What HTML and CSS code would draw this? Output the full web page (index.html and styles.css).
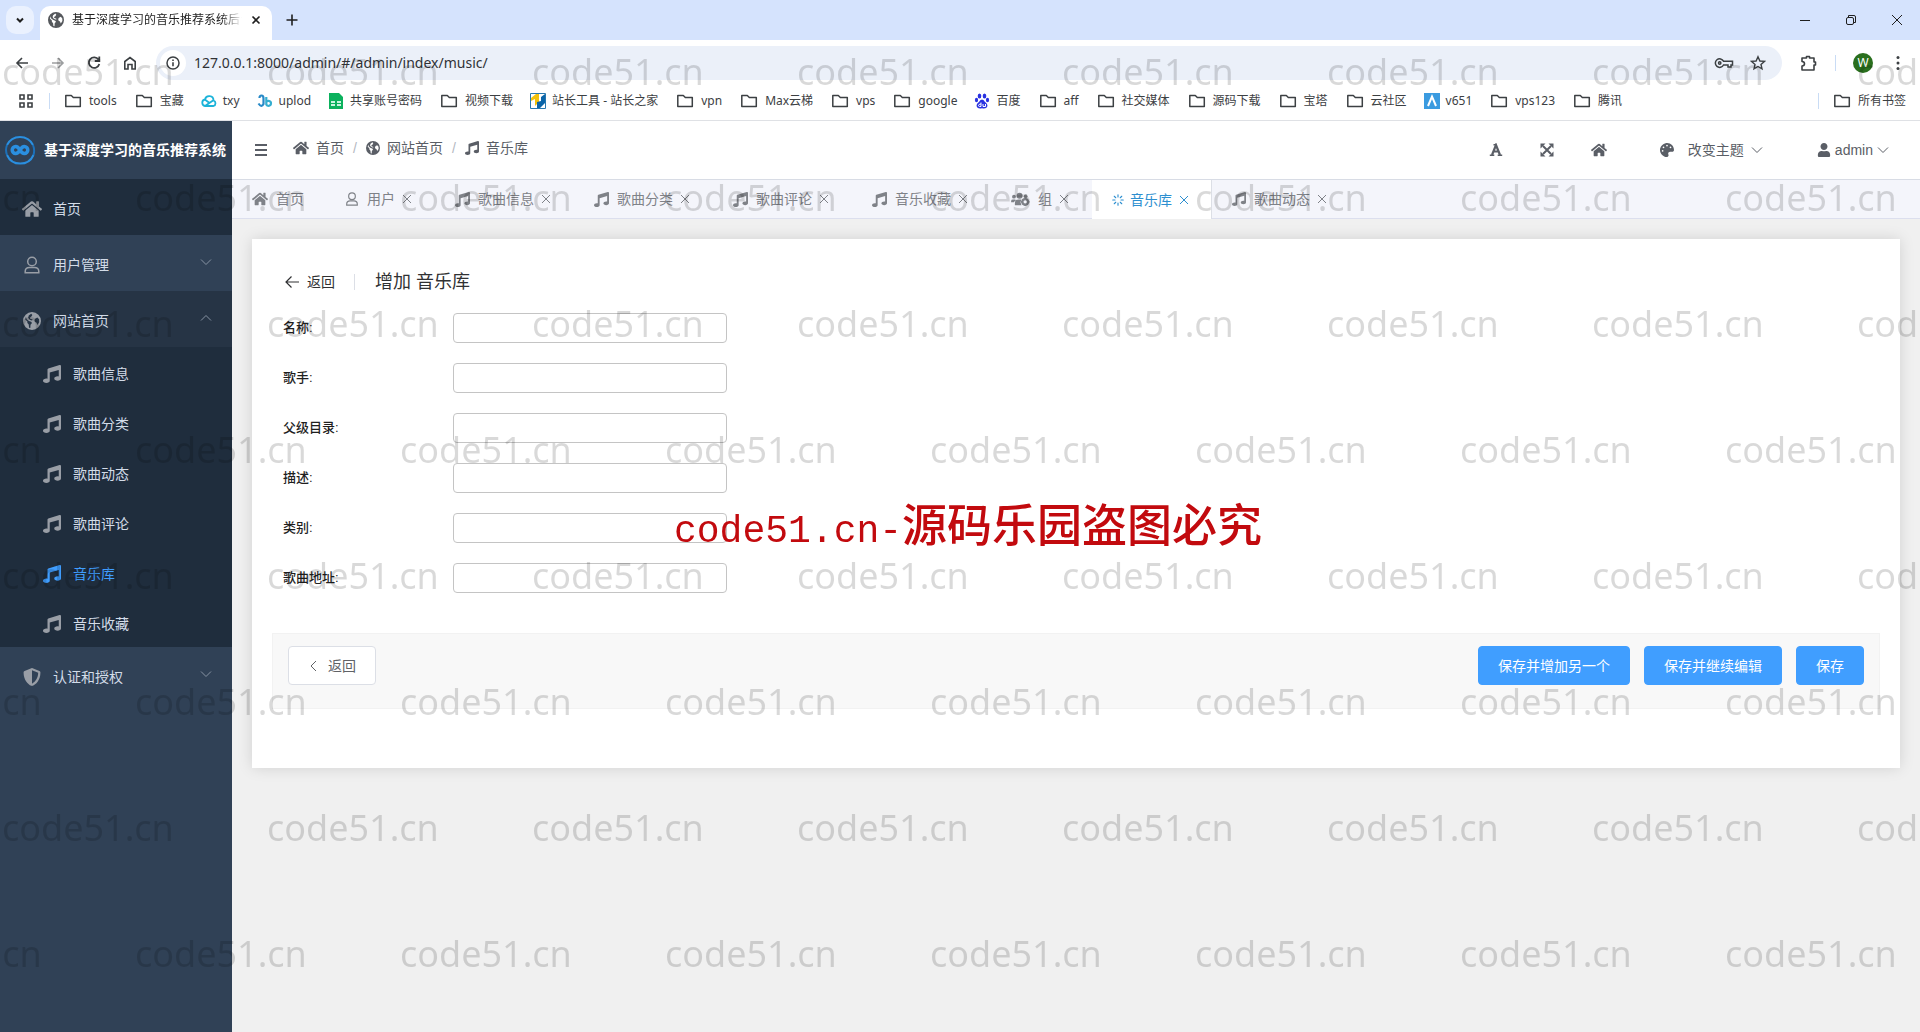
FILE: index.html
```html
<!DOCTYPE html>
<html lang="zh-CN">
<head>
<meta charset="utf-8">
<title>基于深度学习的音乐推荐系统后台</title>
<link rel="stylesheet" href="styles.css">
</head>
<body>
<svg class="sprite" aria-hidden="true">
  <symbol id="music" viewBox="0 0 512 512"><path fill="currentColor" d="M511.99 32.01c0-21.71-21.1-37.01-41.6-30.51L150.4 96c-13.3 4.2-22.4 16.5-22.4 30.5v261.42c-10.05-2.38-20.72-3.92-32-3.92-53.02 0-96 28.65-96 64s42.98 64 96 64 96-28.65 96-64V214.31l256-75.02v184.63c-10.05-2.38-20.72-3.92-32-3.92-53.02 0-96 28.65-96 64s42.98 64 96 64 96-28.65 96-64l-.01-351.99z"/></symbol>
  <symbol id="home" viewBox="0 0 576 512"><path fill="currentColor" d="M280.37 148.26L96 300.11V464a16 16 0 0 0 16 16l112.06-.29a16 16 0 0 0 15.92-16V368a16 16 0 0 1 16-16h64a16 16 0 0 1 16 16v95.64a16 16 0 0 0 16 16.05L464 480a16 16 0 0 0 16-16V300L295.67 148.26a12.19 12.19 0 0 0-15.3 0zM571.6 251.47L488 182.56V44.05a12 12 0 0 0-12-12h-56a12 12 0 0 0-12 12v72.61L318.47 43a48 48 0 0 0-61 0L4.34 251.47a12 12 0 0 0-1.6 16.9l25.5 31A12 12 0 0 0 45.15 301l235.22-193.74a12.19 12.19 0 0 1 15.3 0L530.9 301a12 12 0 0 0 16.9-1.6l25.5-31a12 12 0 0 0-1.7-16.93z"/></symbol>
  <symbol id="palette" viewBox="0 0 512 512"><path fill="currentColor" d="M204.3 5C104.9 24.4 24.8 104.3 5.2 203.4c-37 187 131.7 326.4 258.8 306.7 41.2-6.4 61.4-54.6 42.5-91.7-23.1-45.4 9.9-98.4 60.9-98.4h79.7c35.8 0 64.8-29.6 64.9-65.3C511.5 97.1 368.1-26.9 204.3 5zM96 320c-17.7 0-32-14.3-32-32s14.3-32 32-32 32 14.3 32 32-14.3 32-32 32zm32-128c-17.7 0-32-14.3-32-32s14.3-32 32-32 32 14.3 32 32-14.3 32-32 32zm128-64c-17.7 0-32-14.3-32-32s14.3-32 32-32 32 14.3 32 32-14.3 32-32 32zm128 64c-17.7 0-32-14.3-32-32s14.3-32 32-32 32 14.3 32 32-14.3 32-32 32z"/></symbol>
  <symbol id="person" viewBox="0 0 448 512"><path fill="currentColor" d="M224 256c70.7 0 128-57.3 128-128S294.7 0 224 0 96 57.3 96 128s57.3 128 128 128zm89.6 32h-16.7c-22.2 10.2-46.9 16-72.9 16s-50.6-5.8-72.9-16h-16.7C60.2 288 0 348.2 0 422.4V464c0 26.5 21.5 48 48 48h352c26.5 0 48-21.5 48-48v-41.6c0-74.2-60.2-134.4-134.4-134.4z"/></symbol>
  <symbol id="shield" viewBox="0 0 512 512"><path fill="currentColor" d="M466.5 83.7l-192-80a48.15 48.15 0 0 0-36.9 0l-192 80C27.7 91.1 16 108.6 16 128c0 198.5 114.5 335.7 221.5 380.3 11.8 4.9 25.1 4.9 36.9 0C360.1 472.6 496 349.3 496 128c0-19.4-11.7-36.9-29.5-44.3zM256.1 446.3l-.1-381 175.9 73.3c-3.3 151.4-82.1 261.1-175.8 307.7z"/></symbol>
  <symbol id="globe" viewBox="0 0 16 16"><path fill="currentColor" fill-rule="evenodd" d="M8 0a8 8 0 1 0 0 16A8 8 0 0 0 8 0zM2.600 4.300 3.200 6.400 5.300 8.100 7.200 8.700 8 9.800 6.700 11.300 6.500 14.200 5.400 13.900 5.100 11.200 3.900 9.700 3.800 8.300 2 6.700zM7.300 1.500 8.300 2.700 7.300 4.200 6 5 6.400 6 8 6.500 8.700 7.200 7.300 7.500 5.500 6.400 4.600 5 5.100 3.200zM11 5.800 12.800 4.800 14.300 6.500 14.400 9 12.800 11.500 12 9.500 10.600 8.700 10.200 7z"/></symbol>
  <symbol id="user-line" viewBox="0 0 16 18"><g fill="none" stroke="currentColor" stroke-width="1.500"><circle cx="8" cy="5.500" r="4.300"/><path d="M5.500 11.500h5q4.300 0 4.300 4v1.300H1.200v-1.300q0-4 4.300-4z"/></g></symbol>
  <symbol id="team" viewBox="0 0 20 16"><g fill="currentColor"><circle cx="3" cy="5" r="2"/><circle cx="9" cy="4" r="3.200"/><circle cx="15.500" cy="4.500" r="2"/><path d="M0 11V9.500Q0 8 2 8h2q1 0 1 .7Q3 10 3 11zM4 14v-2q0-4 4-4h3l-1 3 1 3z"/></g><circle cx="15" cy="10.500" r="3" fill="none" stroke="currentColor" stroke-width="2.400"/><path d="M15 6v2M15 13v2M10.500 10.500h2M17.500 10.500h2" stroke="currentColor" stroke-width="2"/></symbol>
  <symbol id="spinner" viewBox="0 0 16 16"><path stroke="currentColor" stroke-width="1.500" stroke-linecap="round" d="M8 1v3M8 12v3M1 8h3M12 8h3M3 3l2 2M11 11l2 2M13 3l-2 2M5 11l-2 2"/></symbol>
  <symbol id="down" viewBox="0 0 12 12"><path fill="none" stroke="currentColor" d="M1 3.500l5 5 5-5"/></symbol>
  <symbol id="up" viewBox="0 0 12 12"><path fill="none" stroke="currentColor" d="M1 8.500l5-5 5 5"/></symbol>
  <symbol id="close" viewBox="0 0 14 14"><path fill="none" stroke="currentColor" d="M3 3l8 8M11 3l-8 8"/></symbol>
  <symbol id="folder" viewBox="0 0 20 16"><path fill="none" stroke="currentColor" stroke-width="1.500" stroke-linejoin="round" d="M2.800 13.500v-11h5.500l2 2h7v9z"/></symbol>
</svg>

<header class="browser">
  <div class="strip">
    <button class="tab-search" aria-label="搜索标签页"><svg width="10" height="10" viewBox="0 0 10 10"><path fill="none" stroke="currentColor" stroke-width="2" d="M2 3.500l3 3 3-3"/></svg></button>
    <div class="browser-tab">
      <svg class="i16"><use href="#globe"/></svg>
      <span class="tab-title">基于深度学习的音乐推荐系统后台</span>
      <button class="plain" aria-label="关闭标签页"><svg width="12" height="12" viewBox="0 0 12 12"><path stroke="currentColor" stroke-width="1.600" d="M2.500 2.500l7 7M9.500 2.500l-7 7"/></svg></button>
    </div>
    <button class="plain new-tab" aria-label="新标签页"><svg width="14" height="14" viewBox="0 0 14 14"><path stroke="currentColor" stroke-width="1.600" d="M7 1.500v11M1.500 7h11"/></svg></button>
    <div class="window-buttons">
      <button class="plain" aria-label="最小化"><svg width="14" height="14" viewBox="0 0 14 14"><path stroke="currentColor" d="M2 7.500h10"/></svg></button>
      <button class="plain" aria-label="还原"><svg width="14" height="14" viewBox="0 0 14 14"><g fill="none" stroke="currentColor"><rect x="2.500" y="4.500" width="7" height="7" rx="1.500"/><path d="M4.500 4V2.500H10q1.500 0 1.500 1.500v5.500H10"/></g></svg></button>
      <button class="plain" aria-label="关闭"><svg width="14" height="14" viewBox="0 0 14 14"><path stroke="currentColor" d="M2 2l10 10M12 2L2 12"/></svg></button>
    </div>
  </div>
  <div class="toolbar">
    <nav class="nav-buttons">
      <button class="plain" aria-label="后退"><svg class="i16" viewBox="0 0 16 16"><path fill="none" stroke="currentColor" stroke-width="1.600" d="M14 8H3M8 3L3 8l5 5"/></svg></button>
      <button class="plain faded" aria-label="前进"><svg class="i16" viewBox="0 0 16 16"><path fill="none" stroke="currentColor" stroke-width="1.600" d="M2 8h11M8 3l5 5-5 5"/></svg></button>
      <button class="plain" aria-label="重新加载"><svg class="i16" viewBox="0 0 16 16"><path fill="none" stroke="currentColor" stroke-width="1.800" d="M12.500 4.500A5.300 5.300 0 1 0 13.300 9M13.300 1.500v4.500H8.800"/></svg></button>
      <button class="plain" aria-label="主页"><svg class="i16" viewBox="0 0 16 16"><path fill="none" stroke="currentColor" stroke-width="1.600" d="M2.800 14V6.500L8 2.500l5.200 4V14H10V9.500H6V14z"/></svg></button>
    </nav>
    <div class="address">
      <span class="info"><svg class="i16" viewBox="0 0 16 16"><circle cx="8" cy="8" r="6" fill="none" stroke="currentColor" stroke-width="1.500"/><path stroke="currentColor" stroke-width="1.600" d="M8 7.200v4M8 4.500v1.500"/></svg></span>
      <input class="url" aria-label="地址" value="127.0.0.1:8000/admin/#/admin/index/music/">
      <button class="plain" aria-label="密码"><svg width="20" height="16" viewBox="0 0 20 16"><g fill="none" stroke="currentColor" stroke-width="1.500"><path d="M9.500 6.200h9V10h-1.500v2h-3v-2H9.500a4.300 4.300 0 1 1 0-3.800z"/><circle cx="5.700" cy="8" r="1.200"/></g></svg></button>
      <button class="plain" aria-label="收藏"><svg class="i16" viewBox="0 0 16 16"><path fill="none" stroke="currentColor" stroke-width="1.400" d="M8 1.800l1.900 4.200 4.500.4-3.400 3 1 4.400L8 11.500l-4 2.300 1-4.400-3.400-3 4.500-.4z"/></svg></button>
    </div>
    <div class="tools">
      <button class="plain" aria-label="扩展程序"><svg width="18" height="18" viewBox="0 0 18 18"><path fill="none" stroke="currentColor" stroke-width="1.600" stroke-linejoin="round" d="M2 4h4.500V2.500h3V4H14v4h1.500v3H14v5H2v-4q2.500 0 2.500-2.200T2 7.500z"/></svg></button>
      <span class="rule"></span>
      <button class="avatar" aria-label="个人资料">W</button>
      <button class="plain" aria-label="菜单"><svg class="i16" viewBox="0 0 16 16"><g fill="currentColor"><circle cx="8" cy="2.500" r="1.500"/><circle cx="8" cy="8" r="1.500"/><circle cx="8" cy="13.500" r="1.500"/></g></svg></button>
    </div>
  </div>
  <nav class="bookmarks">
    <button class="plain" aria-label="应用"><svg class="i16" viewBox="0 0 16 16"><path fill="none" stroke="currentColor" stroke-width="1.600" d="M2 2h4v4H2zM10 2h4v4h-4zM2 10h4v4H2zM10 10h4v4h-4z"/></svg></button>
    <span class="rule"></span>
    <a href="#"><svg class="folder"><use href="#folder"/></svg>tools</a>
    <a href="#"><svg class="folder"><use href="#folder"/></svg>宝藏</a>
    <a href="#"><svg class="i16" viewBox="0 0 16 16"><path fill="none" stroke="#1cb3d9" stroke-width="1.800" d="M4 13a3.300 3.300 0 0 1 0-6.500 4.300 4.300 0 0 1 8.500 1A2.900 2.900 0 0 1 12.500 13zL12 7.500M4.500 7l4 3"/></svg>txy</a>
    <a href="#"><svg class="i16" viewBox="0 0 16 16"><path fill="none" stroke="#2789c7" stroke-width="2.200" d="M1.500 10.500q3 4.500 5 .5V5.500q0-3-2-3t-2 2.500"/><path fill="none" stroke="#35aed0" stroke-width="2.200" d="M9.300 4v7.500a2.500 2.500 0 1 0 .5-3"/></svg>uplod</a>
    <a href="#"><svg class="i16" viewBox="0 0 16 16"><path fill="#0bb15d" d="M1 0h10l4 4v12H1z"/><path fill="#c9f5df" d="M3 8h4v2H3zM9 8h4v2H9zM3 11h4v2H3zM9 11h4v2H9z"/></svg>共享账号密码</a>
    <a href="#"><svg class="folder"><use href="#folder"/></svg>视频下载</a>
    <a href="#"><svg class="i16" viewBox="0 0 16 16"><path fill="#fff" stroke="#2778af" d="M.5.500h15v15H.5z"/><path fill="#f3c20c" d="M1 5l5-4h3v8l-4 4V6L1 8z"/><path fill="#0b65a9" d="M7 9l4-1V4l4-3v9l-5 5H7z"/></svg>站长工具 - 站长之家</a>
    <a href="#"><svg class="folder"><use href="#folder"/></svg>vpn</a>
    <a href="#"><svg class="folder"><use href="#folder"/></svg>Max云梯</a>
    <a href="#"><svg class="folder"><use href="#folder"/></svg>vps</a>
    <a href="#"><svg class="folder"><use href="#folder"/></svg>google</a>
    <a href="#"><svg class="i16" viewBox="0 0 16 16"><g fill="#2932e1"><ellipse cx="5.500" cy="3" rx="1.800" ry="2.500"/><ellipse cx="10.500" cy="3" rx="1.800" ry="2.500"/><ellipse cx="2.500" cy="7" rx="1.600" ry="2.200"/><ellipse cx="13.500" cy="7" rx="1.600" ry="2.200"/><path d="M8 6.500q2 0 3 2.500 3 2 2.300 4.500-.8 2.500-5.300 1.700-4.500.8-5.300-1.700Q2 11 5 9q1-2.500 3-2.500z"/></g><path fill="none" stroke="#fff" d="M7 9.500v4H5.500q-1 0-1-1.200T7 11M9 11v2.500h2.500V11"/></svg>百度</a>
    <a href="#"><svg class="folder"><use href="#folder"/></svg>aff</a>
    <a href="#"><svg class="folder"><use href="#folder"/></svg>社交媒体</a>
    <a href="#"><svg class="folder"><use href="#folder"/></svg>源码下载</a>
    <a href="#"><svg class="folder"><use href="#folder"/></svg>宝塔</a>
    <a href="#"><svg class="folder"><use href="#folder"/></svg>云社区</a>
    <a href="#"><svg class="i16" viewBox="0 0 16 16"><path fill="#3a9be0" d="M0 0h16v16H0z"/><path fill="none" stroke="#fff" stroke-width="2" d="M4 13L8 3.500 12 13"/></svg>v651</a>
    <a href="#"><svg class="folder"><use href="#folder"/></svg>vps123</a>
    <a href="#"><svg class="folder"><use href="#folder"/></svg>腾讯</a>
    <span class="rule push"></span>
    <a href="#"><svg class="folder"><use href="#folder"/></svg>所有书签</a>
  </nav>
</header>

<div class="app">
  <aside class="sidebar">
    <div class="brand">
      <svg width="32" height="32" viewBox="0 0 32 32"><g fill="none" stroke="#2a8fe0" stroke-width="2"><path d="M3 11A14.500 14.500 0 0 1 29 11M29.500 21A14.500 14.500 0 0 1 3 21"/><path stroke="#1d70b8" d="M3 11a14 14 0 0 0 0 10M29 11q2 5 0.500 10"/><path stroke-width="3.500" d="M16 16c-1.500-2.500-2.800-3.500-4.300-3.500a3.500 3.500 0 0 0 0 7c1.500 0 2.800-1 4.300-3.500s2.800-3.500 4.300-3.500a3.500 3.500 0 0 1 0 7c-1.500 0-2.800-1-4.300-3.500z"/></g></svg>
      <strong>基于深度学习的音乐推荐系统</strong>
    </div>
    <nav class="menu">
      <a class="item dark" href="#"><svg class="i20"><use href="#home"/></svg>首页</a>
      <a class="item" href="#"><svg class="i20"><use href="#user-line"/></svg>用户管理<svg class="arrow"><use href="#down"/></svg></a>
      <a class="item open" href="#"><svg class="i20"><use href="#globe"/></svg>网站首页<svg class="arrow"><use href="#up"/></svg></a>
      <div class="submenu">
        <a href="#"><svg class="i20"><use href="#music"/></svg>歌曲信息</a>
        <a href="#"><svg class="i20"><use href="#music"/></svg>歌曲分类</a>
        <a href="#"><svg class="i20"><use href="#music"/></svg>歌曲动态</a>
        <a href="#"><svg class="i20"><use href="#music"/></svg>歌曲评论</a>
        <a class="current" href="#"><svg class="i20"><use href="#music"/></svg>音乐库</a>
        <a href="#"><svg class="i20"><use href="#music"/></svg>音乐收藏</a>
      </div>
      <a class="item" href="#"><svg class="i20"><use href="#shield"/></svg>认证和授权<svg class="arrow"><use href="#down"/></svg></a>
    </nav>
  </aside>

  <div class="content">
    <header class="topbar">
      <button class="plain" aria-label="折叠菜单"><svg width="14" height="14" viewBox="0 0 14 14"><path stroke="currentColor" stroke-width="2" d="M1 2h12M1 7h12M1 12h12"/></svg></button>
      <nav class="crumbs">
        <a href="#"><svg class="i16"><use href="#home"/></svg>首页</a><span class="slash">/</span>
        <a href="#"><svg class="i14"><use href="#globe"/></svg>网站首页</a><span class="slash">/</span>
        <a href="#"><svg class="i14"><use href="#music"/></svg>音乐库</a>
      </nav>
      <div class="actions">
        <button class="plain" aria-label="字体"><svg class="i14" viewBox="0 0 14 14"><path fill="none" stroke="currentColor" stroke-width="2.200" d="M3 12L7 2l4 10M4.500 8.500h5"/><path stroke="currentColor" stroke-width="1.600" d="M.8 12.200h4.500M8.700 12.200h4.500M4.500 1.800H7"/></svg></button>
        <button class="plain" aria-label="全屏"><svg class="i14" viewBox="0 0 14 14"><path stroke="currentColor" stroke-width="2" d="M3 3l8 8M11 3l-8 8"/><path fill="currentColor" d="M.5.500h5l-5 5zM13.500.500v5l-5-5zM.5 13.500v-5l5 5zM13.500 13.500h-5l5-5z"/></svg></button>
        <button class="plain" aria-label="主页"><svg class="i16"><use href="#home"/></svg></button>
      </div>
      <button class="plain theme"><svg class="i14"><use href="#palette"/></svg>改变主题<svg class="i12"><use href="#down"/></svg></button>
      <button class="plain account"><svg class="i14"><use href="#person"/></svg>admin<svg class="i12"><use href="#down"/></svg></button>
    </header>

    <nav class="tabs">
      <div class="tab"><a href="#"><svg class="i16"><use href="#home"/></svg>首页</a></div>
      <div class="tab"><a href="#"><svg class="i14"><use href="#user-line"/></svg>用户</a><button class="plain" aria-label="关闭"><svg class="i14"><use href="#close"/></svg></button></div>
      <div class="tab"><a href="#"><svg class="i15"><use href="#music"/></svg>歌曲信息</a><button class="plain" aria-label="关闭"><svg class="i14"><use href="#close"/></svg></button></div>
      <div class="tab"><a href="#"><svg class="i15"><use href="#music"/></svg>歌曲分类</a><button class="plain" aria-label="关闭"><svg class="i14"><use href="#close"/></svg></button></div>
      <div class="tab"><a href="#"><svg class="i15"><use href="#music"/></svg>歌曲评论</a><button class="plain" aria-label="关闭"><svg class="i14"><use href="#close"/></svg></button></div>
      <div class="tab"><a href="#"><svg class="i15"><use href="#music"/></svg>音乐收藏</a><button class="plain" aria-label="关闭"><svg class="i14"><use href="#close"/></svg></button></div>
      <div class="tab"><a href="#"><svg class="team"><use href="#team"/></svg>组</a><button class="plain" aria-label="关闭"><svg class="i14"><use href="#close"/></svg></button></div>
      <div class="tab active"><a href="#"><svg class="i12"><use href="#spinner"/></svg>音乐库</a><button class="plain" aria-label="关闭"><svg class="i14"><use href="#close"/></svg></button></div>
      <div class="tab"><a href="#"><svg class="i14"><use href="#music"/></svg>歌曲动态</a><button class="plain" aria-label="关闭"><svg class="i14"><use href="#close"/></svg></button></div>
    </nav>

    <main class="card">
      <div class="page-head">
        <a class="back" href="#"><svg class="i16" viewBox="0 0 16 16"><path fill="none" stroke="currentColor" stroke-width="1.200" d="M15 8H2M7.500 2.500L2 8l5.500 5.500"/></svg>返回</a>
        <h1>增加 音乐库</h1>
      </div>
      <form>
        <div class="field"><label for="f1">名称:</label><input id="f1" type="text"></div>
        <div class="field"><label for="f2">歌手:</label><input id="f2" type="text"></div>
        <div class="field"><label for="f3">父级目录:</label><input id="f3" type="text"></div>
        <div class="field"><label for="f4">描述:</label><input id="f4" type="text"></div>
        <div class="field"><label for="f5">类别:</label><input id="f5" type="text"></div>
        <div class="field"><label for="f6">歌曲地址:</label><input id="f6" type="text"></div>
        <div class="submit-row">
          <button class="btn" type="button"><svg class="i12" viewBox="0 0 12 12"><path fill="none" stroke="currentColor" d="M8 1L3 6l5 5"/></svg>返回</button>
          <button class="btn primary first" type="submit">保存并增加另一个</button>
          <button class="btn primary" type="submit">保存并继续编辑</button>
          <button class="btn primary" type="submit">保存</button>
        </div>
      </form>
    </main>
  </div>
</div>

<div class="watermarks" aria-hidden="true">
  <div class="wm"><span>code51.cn</span><span>code51.cn</span><span>code51.cn</span><span>code51.cn</span><span>code51.cn</span><span>code51.cn</span><span>code51.cn</span><span>code51.cn</span></div>
  <div class="wm odd"><span>code51.cn</span><span>code51.cn</span><span>code51.cn</span><span>code51.cn</span><span>code51.cn</span><span>code51.cn</span><span>code51.cn</span><span>code51.cn</span></div>
  <div class="wm"><span>code51.cn</span><span>code51.cn</span><span>code51.cn</span><span>code51.cn</span><span>code51.cn</span><span>code51.cn</span><span>code51.cn</span><span>code51.cn</span></div>
  <div class="wm odd"><span>code51.cn</span><span>code51.cn</span><span>code51.cn</span><span>code51.cn</span><span>code51.cn</span><span>code51.cn</span><span>code51.cn</span><span>code51.cn</span></div>
  <div class="wm"><span>code51.cn</span><span>code51.cn</span><span>code51.cn</span><span>code51.cn</span><span>code51.cn</span><span>code51.cn</span><span>code51.cn</span><span>code51.cn</span></div>
  <div class="wm odd"><span>code51.cn</span><span>code51.cn</span><span>code51.cn</span><span>code51.cn</span><span>code51.cn</span><span>code51.cn</span><span>code51.cn</span><span>code51.cn</span></div>
  <div class="wm"><span>code51.cn</span><span>code51.cn</span><span>code51.cn</span><span>code51.cn</span><span>code51.cn</span><span>code51.cn</span><span>code51.cn</span><span>code51.cn</span></div>
  <div class="wm odd"><span>code51.cn</span><span>code51.cn</span><span>code51.cn</span><span>code51.cn</span><span>code51.cn</span><span>code51.cn</span><span>code51.cn</span><span>code51.cn</span></div>
</div>
<p class="notice"><span class="latin">code51.cn-</span>源码乐园盗图必究</p>
</body>
</html>
```
FILE: styles.css
```css
* { box-sizing: border-box; }

body {
  margin: 0;
  min-height: 100vh;
  display: flex;
  flex-direction: column;
  background: #f0f0f0;
  color: #303133;
  font: 14px/20px "Liberation Sans", "Noto Sans CJK SC", sans-serif;
}

a { color: inherit; text-decoration: none; }
svg { flex: none; display: block; }
button, input { font: inherit; }
.sprite { position: absolute; width: 0; height: 0; }

.plain {
  display: flex;
  align-items: center;
  padding: 0;
  border: 0;
  background: none;
  color: inherit;
}

.i12 { width: 12px; height: 12px; }
.i14 { width: 14px; height: 14px; }
.i15 { width: 15px; height: 15px; }
.i16 { width: 16px; height: 16px; }
.i20 { width: 20px; height: 18px; }
.team { width: 19px; height: 15px; }
.folder { width: 20px; height: 16px; }

/* browser window */
.browser {
  background: #fff;
  border-bottom: 1px solid #dfe1e5;
  color: #3c4043;
  font-family: "Noto Sans", "Noto Sans CJK SC", sans-serif;
}

.strip {
  display: flex;
  height: 40px;
  background: #d5e3fd;
  color: #1f1f1f;
}

.tab-search {
  display: grid;
  place-items: center;
  width: 28px;
  height: 28px;
  margin: 6px;
  padding: 0;
  border: 0;
  border-radius: 10px;
  background: #eaf1fe;
  color: inherit;
}

.browser-tab {
  display: flex;
  align-items: center;
  gap: 8px;
  width: 232px;
  margin-top: 6px;
  padding: 0 10px 6px 8px;
  border-radius: 10px 10px 0 0;
  background: #fff;
  font-size: 12px;
}

.browser-tab > .i16 { color: #55585c; }

.tab-title {
  flex: 1;
  overflow: hidden;
  white-space: nowrap;
  mask-image: linear-gradient(to right, #000 88%, transparent);
}

.new-tab { margin: 0 13px; }
.window-buttons { display: flex; gap: 32px; margin-left: auto; padding-right: 16px; }

.toolbar { display: flex; align-items: center; height: 46px; }
.nav-buttons { display: flex; gap: 20px; padding: 0 18px 0 14px; }
.faded { opacity: .5; }

.address {
  flex: 1;
  display: flex;
  align-items: center;
  gap: 16px;
  height: 34px;
  padding: 0 16px 0 4px;
  border-radius: 17px;
  background: #ebf0f9;
}

.info {
  display: grid;
  place-items: center;
  width: 26px;
  height: 26px;
  margin-right: -8px;
  border-radius: 50%;
  background: #fff;
}

.url {
  flex: 1;
  padding: 0;
  border: 0;
  background: none;
  color: #303236;
}

.tools { display: flex; align-items: center; gap: 17px; padding: 0 14px 0 18px; }
.rule { width: 1px; height: 16px; background: #c9dcf5; }

.avatar {
  width: 20px;
  height: 20px;
  padding: 0;
  border: 0;
  border-radius: 50%;
  background: #2a6f1e;
  color: #fff;
  font-size: 12px;
}

.bookmarks {
  display: flex;
  align-items: center;
  gap: 17px;
  height: 34px;
  padding: 0 14px 4px 18px;
  font-size: 12px;
}

.bookmarks a { display: flex; align-items: center; gap: 6px; white-space: nowrap; }
.bookmarks .rule { margin: 0 -4px 0 -2px; }
.bookmarks .push { margin-left: auto; }

/* admin */
.app { flex: 1; display: flex; }

.sidebar { flex: none; width: 232px; background: #304156; color: #d3dce8; }

.brand {
  display: flex;
  align-items: center;
  gap: 8px;
  height: 58px;
  padding-left: 4px;
  color: #fff;
  white-space: nowrap;
}

.item, .submenu a { display: flex; align-items: center; gap: 11px; }
.item { height: 56px; padding: 4px 20px 0 22px; }
.sidebar .i20 { color: #999ea6; }
.dark { background: #1f2d3d; }
.open { background: #263445; }
.arrow { width: 12px; height: 12px; margin: 0 0 6px auto; color: #8793a3; }
.submenu { background: #1f2d3d; }
.submenu a { height: 50px; padding: 4px 0 0 42px; }
.submenu .current, .submenu .current .i20 { color: #409eff; }

.content { flex: 1; min-width: 0; }

.topbar {
  display: flex;
  align-items: center;
  height: 59px;
  padding: 0 31px 0 22px;
  border-bottom: 1px solid #d8dce5;
  background: #fff;
  color: #5a5e66;
}

.crumbs { display: flex; align-items: center; padding: 0 0 4px 25px; }
.crumbs a { display: flex; align-items: center; gap: 7px; }
.slash { width: 22px; text-align: center; color: #b4b8bf; }
.actions { display: flex; gap: 37px; margin-left: auto; }
.theme { gap: 7px; margin-left: 53px; }
.theme .i14 { margin-right: 7px; }
.account { gap: 4px; margin-left: 54px; }

.tabs {
  display: flex;
  height: 39px;
  border-bottom: 1px solid #dcdfee;
  background: #f4f5fb;
  color: #7f8288;
}

.tab { display: flex; align-items: center; gap: 5px; padding: 0 20px; border-right: 1px solid transparent; }
.tab a { display: flex; align-items: center; gap: 8px; white-space: nowrap; }
.active { height: 39px; border-right-color: #dcdfe6; background: #fff; color: #2d8fd0; }
.active a { gap: 6px; }

.card {
  margin: 20px;
  padding: 33px 20px 59px;
  background: #fff;
  box-shadow: 0 0 14px rgba(0, 0, 0, .13);
}

.page-head { display: flex; align-items: center; height: 20px; padding-left: 12px; }
.back {
  display: flex;
  align-items: center;
  gap: 7px;
  height: 16px;
  padding-right: 19px;
  border-right: 1px solid #dcdfe6;
}
.page-head h1 { margin: 0 0 0 20px; font-size: 18px; font-weight: 400; }

form { padding-top: 11px; }
.field { display: flex; align-items: center; height: 50px; padding-left: 11px; }
.field label { width: 170px; font-size: 13px; font-weight: 500; color: #1f1f1f; }
.field input {
  width: 274px;
  height: 30px;
  padding: 0 8px;
  border: 1px solid #c4c4c4;
  border-radius: 4px;
  background: transparent;
}

.submit-row {
  display: flex;
  gap: 14px;
  margin-top: 30px;
  padding: 12px 15px 23px;
  border: 1px solid #f2f2f2;
  background: #f8f8f8;
}

.btn {
  display: flex;
  align-items: center;
  gap: 8px;
  height: 39px;
  padding: 0 19px;
  border: 1px solid #dcdfe6;
  border-radius: 4px;
  background: #fff;
  color: #606266;
}
.primary { border-color: #409eff; background: #409eff; color: #fff; }
.first { margin-left: auto; }

/* overlays that cover the whole window */
.watermarks {
  position: fixed;
  inset: 0;
  padding: 9px 0 0 2px;
  overflow: hidden;
  pointer-events: none;
  color: rgba(0, 0, 0, .15);
  font: 36px/126px "Noto Sans", sans-serif;
}
.wm { display: flex; height: 126px; }
.wm span { flex: none; width: 265px; }
.odd { margin-left: -132px; }

.notice {
  position: fixed;
  top: 496px;
  left: 674px;
  margin: 0;
  pointer-events: none;
  white-space: nowrap;
  color: #c20a0e;
  font: 500 45px/54px "Noto Sans CJK SC", sans-serif;
}
.latin { font: 38px/54px "Liberation Mono", monospace; }
```
